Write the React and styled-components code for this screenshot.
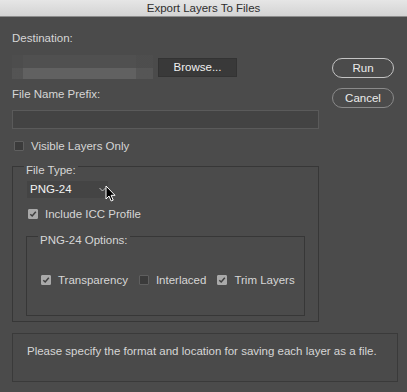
import React from 'react'
import styled, { createGlobalStyle } from 'styled-components'

const GlobalStyle = createGlobalStyle`
    html, body {
        margin:0;
        padding:0;
        background:#4b4b4b;
    }
    body {
        font-family:"Liberation Sans", Arial, sans-serif;
        font-size:11.5px;
        color:#d6d6d6;
    }
`

const Window = styled.div`
    width:407px;
    height:392px;
    background:#4b4b4b;
    display:flex;
    flex-direction:column;
    overflow:hidden;
`
const TitleBar = styled.div`
    height:16px;
    line-height:17px;
    text-align:center;
    color:#2e2e2e;
    background:linear-gradient(#e6e6e6, #d3d3d3);
    border-bottom:1px solid #8c8c8c;
`
const Content = styled.div`
    display:flex;
    flex-direction:column;
    padding:0 9px 0 12px;
`
const TopArea = styled.div`
    display:flex;
    gap:13px;
`
const LeftColumn = styled.div`
    width:307px;
    display:flex;
    flex-direction:column;
`
const Label = styled.div`
    line-height:14px;
    margin-top:${p => p.$top}px;
`
const PathRow = styled.div`
    display:flex;
    align-items:center;
    gap:5px;
    margin-top:10px;
`
const PathField = styled.div`
    width:141px;
    height:24px;
    background:
        linear-gradient(to right, rgba(75,75,75,0.6) 0 8%, transparent 8% 88%, rgba(75,75,75,0.5) 88%),
        linear-gradient(#505050 0 55%, #616161 55%);
    filter:blur(0.6px);
`
const BrowseButton = styled.div`
    width:77px;
    height:17px;
    line-height:17px;
    text-align:center;
    color:#f0f0f0;
    background:#393939;
    border:1px solid #333;
`
const TextInput = styled.div`
    margin-top:9px;
    height:17px;
    background:#434343;
    border:1px solid #5a5a5a;
`
const CheckRow = styled.div`
    display:flex;
    align-items:center;
    gap:${p => p.$gap || 0}px;
    margin-top:${p => p.$top || 0}px;
    padding-left:${p => p.$indent || 0}px;
    line-height:14px;
    white-space:nowrap;
`
const CheckItem = styled.label`
    display:flex;
    align-items:center;
    gap:7px;
    flex-shrink:0;
`
const Box = styled.span`
    width:10px;
    height:10px;
    box-sizing:border-box;
    display:flex;
    align-items:center;
    justify-content:center;
    background:${p => p.$checked ? '#a9a9a9' : '#3b3b3b'};
    border:1px solid ${p => p.$checked ? '#a9a9a9' : '#5f5f5f'};
    border-radius:1px;
`
const Group = styled.fieldset`
    margin:${p => p.$top}px 0 0 ${p => p.$left || 0}px;
    padding:0 13px ${p => p.$bottom}px ${p => p.$indent}px;
    border:1px solid #373737;
    min-width:0;
`
const Legend = styled.legend`
    padding:8px 2px 0;
    margin-left:${p => p.$shift}px;
    line-height:14px;
`
const SelectWrap = styled.div`
    position:relative;
    margin-top:4px;
    width:81px;
`
const Select = styled.div`
    height:17px;
    line-height:17px;
    padding:0 0 0 3px;
    background:#444;
    color:#f2f2f2;
    display:flex;
    align-items:center;
    justify-content:space-between;
`
const Chevron = styled.svg`
    margin-right:2px;
`
const Cursor = styled.svg`
    position:absolute;
    left:78px;
    top:4px;
`
const RightColumn = styled.div`
    display:flex;
    flex-direction:column;
    gap:10px;
    padding-top:41px;
`
const PillButton = styled.div`
    width:60px;
    height:18px;
    line-height:18px;
    text-align:center;
    color:#ececec;
    border:1px solid ${p => p.$primary ? '#c4c4c4' : '#8a8a8a'};
    border-radius:10px;
`
const Message = styled.div`
    margin-top:11px;
    height:37px;
    padding:10px 0 0 14px;
    line-height:14px;
    background:#4a4a4a;
    border:1px solid #3a3a3a;
`

const CheckBox = ({ checked }) => (
    <Box $checked={checked}>
        {checked && (
            <svg width="8" height="8" viewBox="0 0 8 8">
                <path d="M1.3 4.2 L3.2 6 L6.8 1.8" fill="none" stroke="#3f3f3f" strokeWidth="1.5" />
            </svg>
        )}
    </Box>
)

const App = () => {
    return (
        <Window>
            <GlobalStyle />
            <TitleBar>Export Layers To Files</TitleBar>
            <Content>
                <TopArea>
                    <LeftColumn>
                        <Label $top={14}>Destination:</Label>
                        <PathRow>
                            <PathField />
                            <BrowseButton>Browse...</BrowseButton>
                        </PathRow>
                        <Label $top={8}>File Name Prefix:</Label>
                        <TextInput />
                        <CheckRow $top={10} $indent={2}>
                            <CheckItem>
                                <CheckBox />
                                Visible Layers Only
                            </CheckItem>
                        </CheckRow>
                        <Group $top={2} $bottom={5} $indent={14}>
                            <Legend $shift={-3}>File Type:</Legend>
                            <SelectWrap>
                                <Select>
                                    PNG-24
                                    <Chevron width="7" height="5" viewBox="0 0 7 5">
                                        <path d="M0.5 1 L3.5 4 L6.5 1" fill="none" stroke="#bdbdbd" strokeWidth="1" />
                                    </Chevron>
                                </Select>
                                <Cursor width="11" height="17" viewBox="0 0 11 17">
                                    <path d="M1 1 L1 14 L4 11 L6.2 16 L8.2 15.1 L6.1 10.3 L10 10.3 Z" fill="#000" stroke="#fff" strokeWidth="1" strokeLinejoin="round" />
                                </Cursor>
                            </SelectWrap>
                            <CheckRow $top={9} $indent={1}>
                                <CheckItem>
                                    <CheckBox checked />
                                    Include ICC Profile
                                </CheckItem>
                            </CheckRow>
                            <Group $top={4} $left={-1} $bottom={28} $indent={13}>
                                <Legend $shift={-2}>PNG-24 Options:</Legend>
                                <CheckRow $top={26} $indent={1} $gap={11}>
                                    <CheckItem>
                                        <CheckBox checked />
                                        Transparency
                                    </CheckItem>
                                    <CheckItem>
                                        <CheckBox />
                                        Interlaced
                                    </CheckItem>
                                    <CheckItem>
                                        <CheckBox checked />
                                        Trim Layers
                                    </CheckItem>
                                </CheckRow>
                            </Group>
                        </Group>
                    </LeftColumn>
                    <RightColumn>
                        <PillButton $primary>Run</PillButton>
                        <PillButton>Cancel</PillButton>
                    </RightColumn>
                </TopArea>
                <Message>Please specify the format and location for saving each layer as a file.</Message>
            </Content>
        </Window>
    )
}

export default App
